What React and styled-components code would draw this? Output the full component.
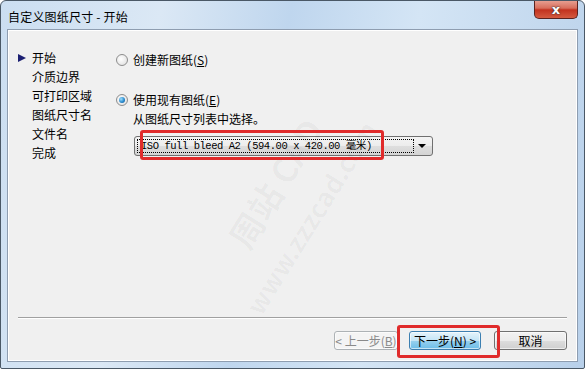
import styled, { createGlobalStyle } from "styled-components"

const Global = createGlobalStyle`
  html, body { margin: 0; padding: 0; background: #fff; }
  body { font-family: "Noto Sans CJK SC", "Noto Sans", sans-serif; font-size: 12px; color: #000; }
`

const Win = styled.div`
  position: relative;
  width: 585px;
  height: 369px;
  box-sizing: border-box;
  display: flex;
  flex-direction: column;
  border: 1px solid #4a5866;
  border-radius: 6px 6px 2px 2px;
  background: linear-gradient(100deg, #cbdef1 0%, #dbe8f5 25%, #bfd6ee 45%, #d4e5f5 65%, #b8d0ea 100%);
  overflow: hidden;
`
const TitleBar = styled.div`
  height: 28px;
  display: flex;
  align-items: flex-start;
  justify-content: space-between;
  padding-left: 7px;
`
const Title = styled.div`
  margin-top: 7px;
  font-size: 12px;
  color: #000;
  letter-spacing: 0.2px;
`
const CloseBtn = styled.div`
  width: 44px;
  height: 19px;
  margin-right: 6px;
  margin-top: -1px;
  box-sizing: border-box;
  border: 1px solid #5a2320;
  border-top: none;
  border-radius: 0 0 5px 5px;
  background: linear-gradient(#e9a497 0%, #d86e5c 45%, #c2321f 55%, #d45a40 100%);
  display: flex;
  align-items: center;
  justify-content: center;
  color: #fff;
  font-family: "DejaVu Sans", sans-serif;
  font-weight: bold;
  font-size: 13px;
  text-shadow: 0 0 2px #333, 0 0 1px #333;
`
const Client = styled.div`
  flex: 1;
  margin: 0 6px 6px 6px;
  border: 1px solid #8e9db0;
  background: #f0f0f0;
  display: flex;
  flex-direction: column;
  box-shadow: inset 0 0 0 1px #fff;
`
const Body = styled.div`
  flex: 1;
  display: flex;
  padding-top: 18px;
`
const Nav = styled.div`
  width: 98px;
  padding-left: 10px;
  display: flex;
  flex-direction: column;
`
const NavItem = styled.div`
  height: 19px;
  line-height: 19px;
  display: flex;
  align-items: center;
  gap: 6px;
  padding-left: ${(p) => (p.active ? 0 : 14)}px;
`
const Arrow = styled.span`
  width: 0;
  height: 0;
  border-top: 4px solid transparent;
  border-bottom: 4px solid transparent;
  border-left: 8px solid #1b1f72;
`
const Content = styled.div`
  display: flex;
  flex-direction: column;
`
const RadioRow = styled.label`
  height: 19px;
  display: flex;
  align-items: center;
  gap: 5px;
  margin-top: ${(p) => p.mt || 0}px;
`
const Radio = styled.span`
  width: 12px;
  height: 12px;
  box-sizing: border-box;
  border-radius: 50%;
  border: 1px solid #8d8d8d;
  background: radial-gradient(circle at 40% 40%, #fff 0%, #e6e6e6 70%, #d0d0d0 100%);
  display: flex;
  align-items: center;
  justify-content: center;
  &::after {
    content: "";
    display: ${(p) => (p.checked ? "block" : "none")};
    width: 6px;
    height: 6px;
    border-radius: 50%;
    background: radial-gradient(circle at 35% 35%, #9fe0ff 0%, #2b8ccf 55%, #0d4d8a 100%);
  }
`
const SubText = styled.div`
  height: 19px;
  line-height: 19px;
  margin-left: 17px;
`
const Select = styled.div`
  margin: 8px 0 0 18px;
  width: 299px;
  height: 20px;
  box-sizing: border-box;
  border: 1px solid #707070;
  border-radius: 3px;
  background: linear-gradient(#f4f4f4 0%, #ececec 50%, #dedede 51%, #d4d4d4 100%);
  display: flex;
  align-items: center;
  padding: 2px;
`
const SelectText = styled.div`
  flex: 1;
  height: 14px;
  box-sizing: border-box;
  border: 1px dotted #000;
  line-height: 12px;
  font-family: "Liberation Mono", "Noto Sans CJK SC", monospace;
  font-size: 10.5px;
  letter-spacing: -0.45px;
  padding-left: 3px;
  white-space: nowrap;
  overflow: hidden;
`
const SelectArrow = styled.div`
  width: 16px;
  display: flex;
  justify-content: center;
  &::after {
    content: "";
    border-left: 4px solid transparent;
    border-right: 4px solid transparent;
    border-top: 4px solid #000;
  }
`
const Sep = styled.div`
  height: 0;
  margin: 0 10px;
  border-top: 1px solid #a0a0a0;
  border-bottom: 1px solid #fff;
`
const Buttons = styled.div`
  display: flex;
  justify-content: flex-end;
  padding: 12px 10px 11px 0;
  gap: 11px;
`
const Btn = styled.div`
  width: ${(p) => p.w}px;
  height: 19px;
  box-sizing: border-box;
  border-radius: 3px;
  display: flex;
  align-items: center;
  justify-content: center;
  font-size: 12px;
  white-space: pre;
  margin-left: ${(p) => p.ml || 0}px;
  border: 1px solid ${(p) => (p.kind === "disabled" ? "#adb2b5" : p.kind === "focus" ? "#3c7fb1" : "#707070")};
  color: ${(p) => (p.kind === "disabled" ? "#8a8a8a" : "#000")};
  background: ${(p) =>
    p.kind === "disabled"
      ? "#f4f4f4"
      : p.kind === "focus"
      ? "linear-gradient(#e5f4fc 0%, #c4e5f6 50%, #98d1ef 51%, #6cbde8 100%)"
      : "linear-gradient(#f2f2f2 0%, #ebebeb 50%, #dddddd 51%, #cfcfcf 100%)"};
  box-shadow: inset 0 0 0 1px rgba(255, 255, 255, 0.6);
`
const Mark = styled.div`
  position: absolute;
  left: ${(p) => p.x}px;
  top: ${(p) => p.y}px;
  width: ${(p) => p.w}px;
  height: ${(p) => p.h}px;
  box-sizing: border-box;
  border: 3px solid #e02b2b;
  border-radius: 3px;
  pointer-events: none;
`
const Watermark = styled.div`
  position: absolute;
  left: ${(p) => p.x}px;
  top: ${(p) => p.y}px;
  transform: rotate(-58deg);
  transform-origin: left top;
  color: rgba(0, 0, 0, 0.035);
  font-size: ${(p) => p.size}px;
  font-weight: bold;
  white-space: nowrap;
  pointer-events: none;
`

const navItems = ["开始", "介质边界", "可打印区域", "图纸尺寸名", "文件名", "完成"]

const App = () => {
  return (
    <Win>
      <Global />
      <TitleBar>
        <Title>自定义图纸尺寸 - 开始</Title>
        <CloseBtn>x</CloseBtn>
      </TitleBar>
      <Client>
        <Body>
          <Nav>
            {navItems.map((t, i) => (
              <NavItem key={t} active={i === 0}>
                {i === 0 && <Arrow />}
                <span>{t}</span>
              </NavItem>
            ))}
          </Nav>
          <Content>
            <RadioRow mt={2}>
              <Radio />
              <span>创建新图纸(<u>S</u>)</span>
            </RadioRow>
            <RadioRow mt={21}>
              <Radio checked />
              <span>使用现有图纸(<u>E</u>)</span>
            </RadioRow>
            <SubText>从图纸尺寸列表中选择。</SubText>
            <Select>
              <SelectText>ISO full bleed A2 (594.00 x 420.00 毫米)</SelectText>
              <SelectArrow />
            </Select>
          </Content>
        </Body>
        <Sep />
        <Buttons>
          <Btn w={64} kind="disabled"><span>&lt; 上一步(<u>B</u>)</span></Btn>
          <Btn w={72} kind="focus"><span>下一步(<u>N</u>) &gt;</span></Btn>
          <Btn w={73} ml={2}>取消</Btn>
        </Buttons>
      </Client>
      <Watermark x={215} y={230} size={34}>周站 CAD</Watermark>
      <Watermark x={235} y={300} size={26}>www.zzzcad.com</Watermark>
      <Mark x={139} y={129} w={244} h={30} />
      <Mark x={396} y={324} w={103} h={33} />
    </Win>
  )
}

export default App
